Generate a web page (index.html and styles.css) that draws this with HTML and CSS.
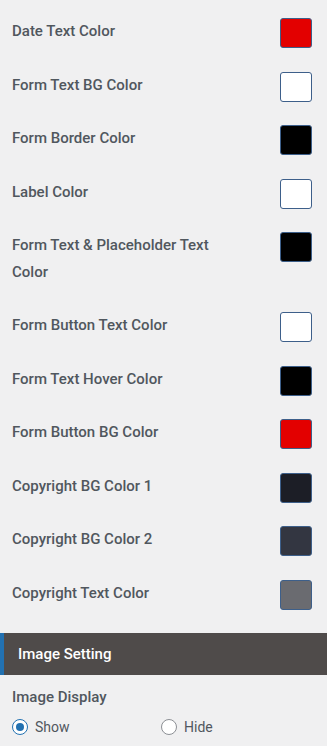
FILE: index.html
```html
<!DOCTYPE html>
<html lang="en">

<head>
  <meta charset="UTF-8">
  <meta name="viewport" content="width=device-width, initial-scale=1.0">
  <title>Theme Options</title>
  <link rel="stylesheet" href="styles.css">
</head>

<body>
  <div id="panel">
    <ul class="color-list">
      <li class="row"><span class="label">Date Text Color</span><span class="swatch red"></span></li>
      <li class="row"><span class="label">Form Text BG Color</span><span class="swatch white"></span></li>
      <li class="row"><span class="label">Form Border Color</span><span class="swatch black"></span></li>
      <li class="row"><span class="label">Label Color</span><span class="swatch white"></span></li>
      <li class="row tall"><span class="label">Form Text &amp; Placeholder Text Color</span><span class="swatch black"></span></li>
      <li class="row"><span class="label">Form Button Text Color</span><span class="swatch white"></span></li>
      <li class="row"><span class="label">Form Text Hover Color</span><span class="swatch black"></span></li>
      <li class="row"><span class="label">Form Button BG Color</span><span class="swatch red"></span></li>
      <li class="row"><span class="label">Copyright BG Color 1</span><span class="swatch navy"></span></li>
      <li class="row"><span class="label">Copyright BG Color 2</span><span class="swatch slate"></span></li>
      <li class="row"><span class="label">Copyright Text Color</span><span class="swatch gray"></span></li>
    </ul>

    <div class="section-title">Image Setting</div>

    <div class="field">
      <div class="field-name">Image Display</div>
      <div class="radios">
        <label class="radio"><span class="dot checked"></span>Show</label>
        <label class="radio"><span class="dot"></span>Hide</label>
      </div>
    </div>
  </div>
</body>

</html>
```

FILE: styles.css
```css
* {
  margin: 0;
  padding: 0;
  box-sizing: border-box;
}

li {
  list-style: none;
}

body {
  background: #f0f0f1;
  font-family: Roboto, "Noto Sans", sans-serif;
  color: #50575e;
  font-size: 15px;
}

#panel {
  padding-top: 18px;
}

.color-list {
  padding: 0 15px 0 12px;
}

.row {
  display: flex;
  justify-content: space-between;
  align-items: flex-start;
  height: 53.5px;
}

.row.tall {
  height: 80px;
}

.label {
  font-weight: 500;
  line-height: 26.5px;
  width: 220px;
}

.swatch {
  width: 32px;
  height: 30px;
  border: 1px solid #3d5f8a;
  border-radius: 3px;
  flex-shrink: 0;
}

.red {
  background: #e30000;
}

.white {
  background: #ffffff;
}

.black {
  background: #000000;
}

.navy {
  background: #1c1e26;
}

.slate {
  background: #333641;
}

.gray {
  background: #6a6b70;
}

.section-title {
  height: 42px;
  line-height: 42px;
  background: #4f4b4a;
  border-left: 4px solid #2271b1;
  color: #ffffff;
  font-weight: 500;
  font-size: 15px;
  padding-left: 14px;
}

.field {
  padding: 11px 12px 0;
}

.field-name {
  font-weight: 500;
  line-height: 22px;
}

.radios {
  display: flex;
  margin-top: 11px;
}

.radio {
  display: flex;
  align-items: center;
  width: 149px;
  font-size: 14px;
  color: #50575e;
}

.dot {
  width: 16px;
  height: 16px;
  border: 1px solid #8c8f94;
  border-radius: 50%;
  background: #ffffff;
  margin-right: 7px;
  display: flex;
  align-items: center;
  justify-content: center;
}

.dot.checked {
  border-color: #2271b1;
}

.dot.checked::after {
  content: "";
  width: 8px;
  height: 8px;
  border-radius: 50%;
  background: #2271b1;
}
```
